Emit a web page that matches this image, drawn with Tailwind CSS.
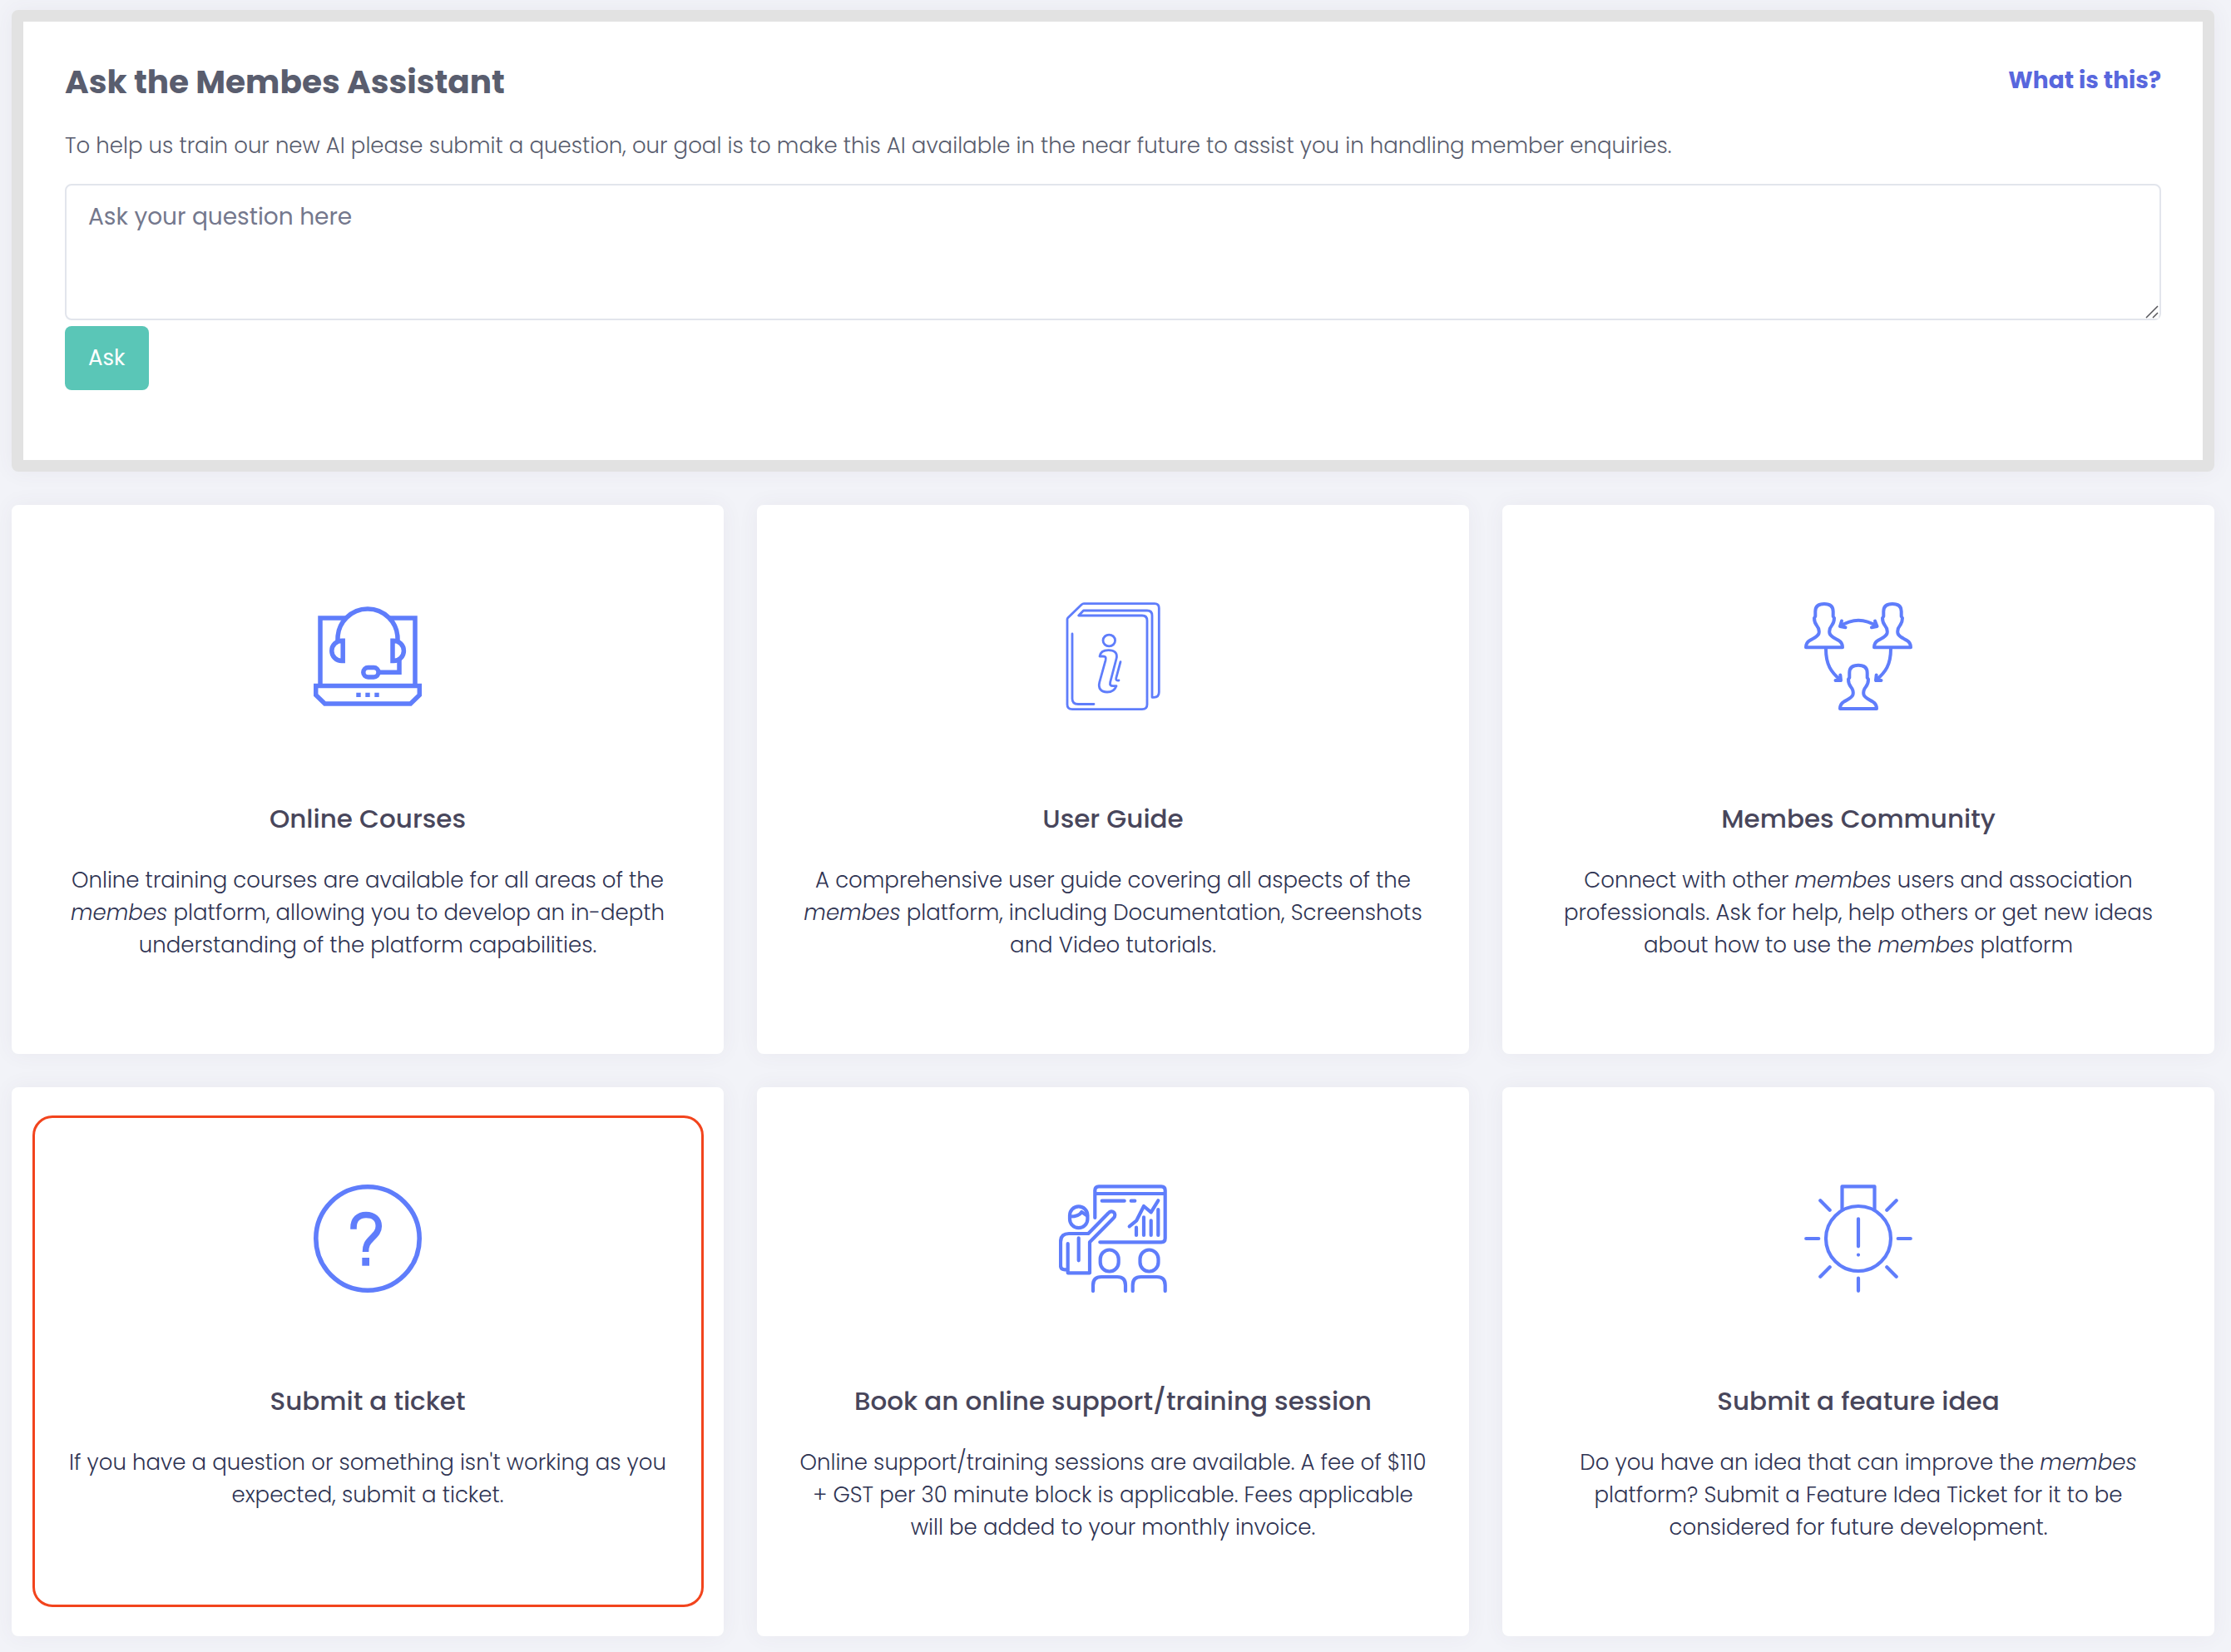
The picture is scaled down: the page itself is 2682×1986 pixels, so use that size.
<!DOCTYPE html>
<html lang="en">
<head>
<meta charset="utf-8">
<meta name="viewport" content="width=device-width, initial-scale=1">
<title>Membes Support</title>
<script src="https://cdn.jsdelivr.net/npm/@tailwindcss/browser@4"></script>
</head>
<body class="min-h-screen bg-[#f2f3f8] font-[Poppins,Inter,sans-serif]">
<main class="flex flex-col gap-10 pt-3 pr-5 pb-5 pl-[14px]">

  <section class="rounded-lg border-[14px] border-[#e2e2e2] bg-white px-[50px] pt-[49px] pb-[84px] shadow-[0_0_26px_rgba(82,63,105,0.06)]">
    <div class="flex items-start justify-between">
      <h1 class="text-[39px] leading-12 font-bold text-[#595d6e]">Ask the Membes Assistant</h1>
      <a href="#about" class="text-[28px] leading-11 font-bold text-[#5867dd]">What is this?</a>
    </div>
    <p class="mt-8 text-[26px] leading-10 font-light text-[#595d6e]">To help us train our new AI please submit a question, our goal is to make this AI available in the near future to assist you in handling member enquiries.</p>
    <form class="mt-[26px] flex flex-col items-start gap-[7px]">
      <div class="relative w-full">
        <textarea aria-label="Your question" placeholder="Ask your question here" class="block h-[164px] w-full resize rounded-lg border-2 border-[#e2e5ec] px-[26px] py-[18px] text-[28px] leading-10 text-[#595d6e] placeholder:text-[#74788d]"></textarea>
        <svg class="pointer-events-none absolute right-[3px] bottom-[2px] size-[16px] bg-white" viewBox="0 0 16 16" fill="none" stroke="#55555a" stroke-width="1.500" aria-hidden="true"><path d="M1 15L15 1M9 15L15 9"/></svg>
      </div>
      <button type="button" class="h-[77px] rounded-lg bg-[#5ac6b7] px-7 text-[26px] text-white">Ask</button>
    </form>
  </section>

  <div class="grid grid-cols-3 gap-10 text-center">

    <a href="#courses" class="flex flex-col items-center rounded-lg bg-white px-[50px] pt-[117px] pb-[111px] shadow-[0_0_26px_rgba(82,63,105,0.06)]">
      <svg class="size-[130px] text-[#5f7dfb]" viewBox="0 0 130 130" fill="none" stroke="currentColor" stroke-width="5.5" aria-hidden="true">
        <path d="M8 98V19H38M92 19H122V98"/>
        <path d="M2.7 100.4H127.3V111.5L116.5 122H13.5L2.7 111.5Z"/>
        <path d="M29 46.500V44A36 36 0 0 1 101 44V46.500"/>
        <path d="M35.200 46.200H34A12.200 12.200 0 0 0 34 70.600H35.200Z"/>
        <path d="M95 46.200H96.200A12.200 12.200 0 0 1 96.200 70.600H95Z"/>
        <path d="M103 69V84.300H79"/>
        <rect x="59.800" y="78.500" width="18.200" height="11.500" rx="5.700"/>
        <path fill="currentColor" stroke="none" d="M51.300 108.700h5.400v5.400h-5.400zM62.300 108.700h5.400v5.400h-5.400zM73.300 108.700h5.400v5.400h-5.400z"/>
      </svg>
      <h2 class="mt-[106px] text-[31px] leading-12 font-medium text-[#48465b]">Online Courses</h2>
      <p class="mt-[31px] text-[26px] leading-[39px] font-light text-[#2f3453]">Online training courses are available for all areas of the <em>membes</em> platform, allowing you to develop an in-depth understanding of the platform capabilities.</p>
    </a>

    <a href="#guide" class="flex flex-col items-center rounded-lg bg-white px-[50px] pt-[117px] pb-[111px] shadow-[0_0_26px_rgba(82,63,105,0.06)]">
      <svg class="size-[130px] text-[#5f7dfb]" viewBox="0 0 130 130" fill="none" stroke="currentColor" stroke-width="2.8" stroke-linecap="round" stroke-linejoin="round" aria-hidden="true">
        <path d="M23.700 16H100Q106 16 106 22V123Q106 128.600 100 128.600H16Q10 128.600 10 123V20.500Q10 19.500 11 18.500L27 3Q28.500 1.700 30 1.700H115Q120.300 1.700 120.300 7V108Q120.300 114.300 114 114.300H112V16Q112 10 106 10H29.500Z"/>
        <path d="M16 38V116Q16 122.500 23 122.500H42"/>
        <ellipse cx="60.300" cy="46" rx="7.300" ry="6.900"/>
        <path d="M49 65C50 59 55 57.700 59.500 57.700C67 57.700 70.800 61 69 68L61.700 96C61 99.500 62 100.700 65 100.700H69C67 106 63 108 58 108C50 108 47 103 48.800 96L56 70C57 66 56 65 53 65Z"/>
        <path d="M74 71.700L68.800 91Q68 94.500 72 94"/>
      </svg>
      <h2 class="mt-[106px] text-[31px] leading-12 font-medium text-[#48465b]">User Guide</h2>
      <p class="mt-[31px] text-[26px] leading-[39px] font-light text-[#2f3453]">A comprehensive user guide covering all aspects of the <em>membes</em> platform, including Documentation, Screenshots and Video tutorials.</p>
    </a>

    <a href="#community" class="flex flex-col items-center rounded-lg bg-white px-[50px] pt-[117px] pb-[111px] shadow-[0_0_26px_rgba(82,63,105,0.06)]">
      <svg class="size-[130px] text-[#5f7dfb]" viewBox="0 0 130 130" fill="none" stroke="currentColor" stroke-width="4" stroke-linecap="round" stroke-linejoin="round" aria-hidden="true">
        <defs>
          <path id="person" d="M24 2C17 2 13.300 5 13.300 11V17L12 19C12 24 13 25.500 15 28C17.500 31 18.500 33 17.500 37.500C16 42 10 43.500 6.500 46C3 48 2 50 2 54.300H46C46 50 45 48 41.500 46C38 43.500 32 42 30.500 37.500C29.500 33 30.500 31 33 28C35 25.500 36 24 36 19L34.700 17V11C34.700 5 31 2 24 2Z"/>
        </defs>
        <use href="#person"/>
        <use href="#person" x="82"/>
        <use href="#person" x="41" y="73.700"/>
        <path d="M43 29Q65 14.500 87.500 29M45 22.500L43 29L49.500 30.300M85 22.500L87.500 29L81 30.300"/>
        <path d="M26 56C26 75 32 84 44 94M43.300 87.500L44 94H37.500"/>
        <path d="M104 56C104 75 98 84 86 94M86.700 87.500L86 94H92.500"/>
      </svg>
      <h2 class="mt-[106px] text-[31px] leading-12 font-medium text-[#48465b]">Membes Community</h2>
      <p class="mt-[31px] text-[26px] leading-[39px] font-light text-[#2f3453]">Connect with other <em>membes</em> users and association professionals. Ask for help, help others or get new ideas about how to use the <em>membes</em> platform</p>
    </a>

    <a href="#ticket" class="relative flex flex-col items-center rounded-lg bg-white px-[50px] pt-[117px] pb-[111px] shadow-[0_0_26px_rgba(82,63,105,0.06)]">
      <span class="pointer-events-none absolute top-[34px] right-6 bottom-[35px] left-[25px] rounded-3xl border-3 border-[#f2441d]"></span>
      <svg class="size-[130px] text-[#5f7dfb]" viewBox="0 0 130 130" fill="none" stroke="currentColor" aria-hidden="true">
        <circle cx="65" cy="65" r="62.200" stroke-width="5.600"/>
        <path stroke-width="7.600" d="M48 53.700V52C48 42 54 36.500 63 36.500C72.500 36.500 78.300 42 78.300 50C78.300 56 75 59.500 70 64.500C64.500 70 62.500 73 62.500 81"/>
        <path fill="currentColor" stroke="none" d="M58.300 88h8.700v9.700h-8.700z"/>
      </svg>
      <h2 class="mt-[106px] text-[31px] leading-12 font-medium text-[#48465b]">Submit a ticket</h2>
      <p class="mt-[31px] text-[26px] leading-[39px] font-light text-[#2f3453]">If you have a question or something isn't working as you expected, submit a ticket.</p>
    </a>

    <a href="#session" class="flex flex-col items-center rounded-lg bg-white px-[50px] pt-[117px] pb-[111px] shadow-[0_0_26px_rgba(82,63,105,0.06)]">
      <svg class="size-[130px] text-[#5f7dfb]" viewBox="0 0 130 130" fill="none" stroke="currentColor" stroke-width="4.200" stroke-linecap="round" stroke-linejoin="round" aria-hidden="true">
        <path d="M43.300 40V7Q43.300 2.300 48 2.300H123Q127.700 2.300 127.700 7V64.500Q127.700 69.300 123 69.300H49.300M43.300 11H127.700"/>
        <path d="M51.700 19.700H78.700M86.700 19.700H91.300"/>
        <path d="M84.700 50.300L93.300 43.300L102 26L110.700 33.300L119.300 19.300M93 51.700V61M102 39.300V61M110.700 43.300V61M119.300 30V61"/>
        <rect x="13" y="26.300" width="21.400" height="25.800" rx="10.700"/>
        <path d="M13.500 38.500C20 38.500 25 37 27.300 33L34 37.500"/>
        <path d="M8.700 102.300H7Q2 102.300 2 97V69Q2 59 12 59H35.300L59.300 34.500C64 29 70.500 35.500 65.500 40.500L37 69.300V106.300H10.700V71M23.700 64.300V91.300"/>
        <rect x="49.700" y="78.500" width="22" height="26" rx="11"/>
        <rect x="97.500" y="78.500" width="22" height="26" rx="11"/>
        <path d="M41 128V121Q41 111 51 111H70Q80 111 80 121V128M88.700 128V121Q88.700 111 98.700 111H117.700Q127.700 111 127.700 121V128"/>
      </svg>
      <h2 class="mt-[106px] text-[31px] leading-12 font-medium text-[#48465b]">Book an online support/training session</h2>
      <p class="mt-[31px] text-[26px] leading-[39px] font-light text-[#2f3453]">Online support/training sessions are available. A fee of $110 + GST per 30 minute block is applicable. Fees applicable will be added to your monthly invoice.</p>
    </a>

    <a href="#feature" class="flex flex-col items-center rounded-lg bg-white px-[50px] pt-[117px] pb-[111px] shadow-[0_0_26px_rgba(82,63,105,0.06)]">
      <svg class="size-[130px] text-[#5f7dfb]" viewBox="0 0 130 130" fill="none" stroke="currentColor" stroke-width="4.200" stroke-linecap="round" stroke-linejoin="round" aria-hidden="true">
        <circle cx="65" cy="65" r="39"/>
        <path d="M45.500 30V2.300H84.500V30"/>
        <path d="M2.200 65H17.300M112.700 65H127.800M65 112.700V127.800M19.300 19.300L30.700 30.700M110.700 19.300L99.300 30.700M30.700 99.300L19.300 110.700M99.300 99.300L110.700 110.700M65 41.300V74.300M65 84.500V84.600"/>
      </svg>
      <h2 class="mt-[106px] text-[31px] leading-12 font-medium text-[#48465b]">Submit a feature idea</h2>
      <p class="mt-[31px] text-[26px] leading-[39px] font-light text-[#2f3453]">Do you have an idea that can improve the <em>membes</em> platform? Submit a Feature Idea Ticket for it to be considered for future development.</p>
    </a>

  </div>
</main>
</body>
</html>
